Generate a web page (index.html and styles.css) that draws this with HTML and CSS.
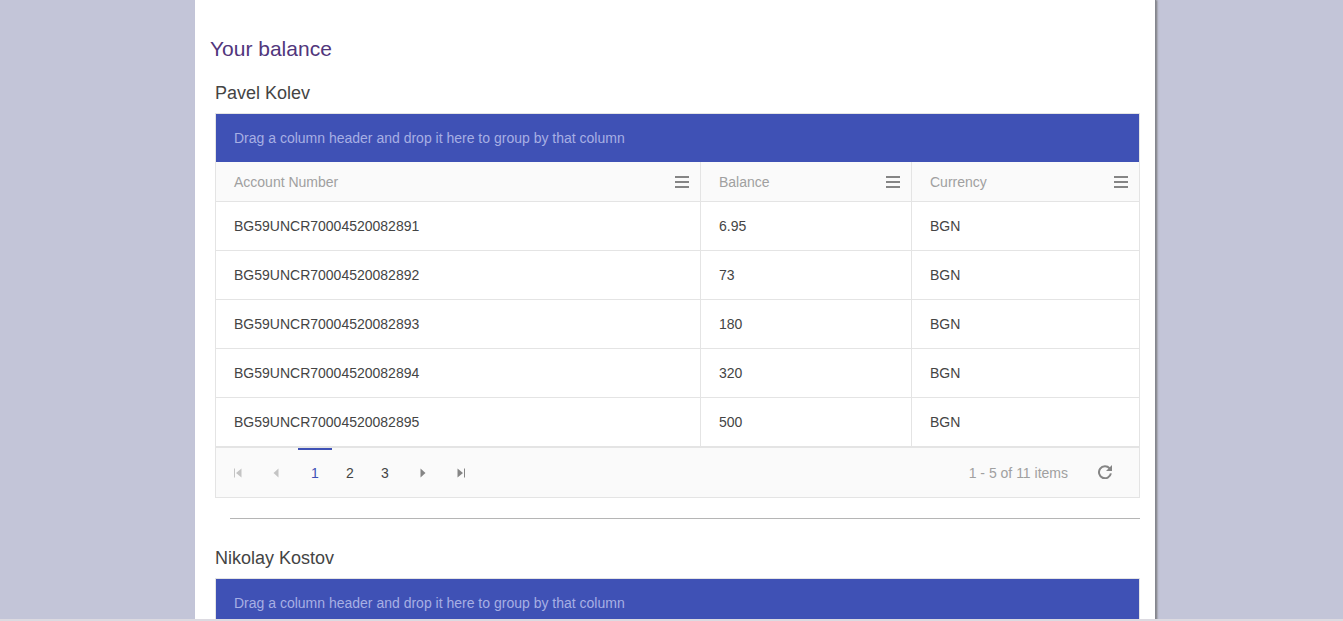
FILE: index.html
```html
<!DOCTYPE html>
<html lang="en">
<head>
<meta charset="utf-8">
<title>Your balance</title>
<link rel="stylesheet" href="styles.css">
</head>
<body>
<div class="viewport">
<main class="panel">
  <h2 class="title">Your balance</h2>

  <section class="account">
    <h3 class="owner">Pavel Kolev</h3>
    <div class="grid">
      <div class="group-bar">Drag a column header and drop it here to group by that column</div>
      <table class="table">
        <colgroup><col class="col-number"><col class="col-balance"><col class="col-currency"></colgroup>
        <thead>
          <tr>
            <th scope="col"><div class="head"><span>Account Number</span><button class="menu" type="button" aria-label="Account Number column menu"><svg width="14" height="12" viewBox="0 0 14 12"><path d="M0 0h14v2H0zM0 5h14v2H0zM0 10h14v2H0z"/></svg></button></div></th>
            <th scope="col"><div class="head"><span>Balance</span><button class="menu" type="button" aria-label="Balance column menu"><svg width="14" height="12" viewBox="0 0 14 12"><path d="M0 0h14v2H0zM0 5h14v2H0zM0 10h14v2H0z"/></svg></button></div></th>
            <th scope="col"><div class="head"><span>Currency</span><button class="menu" type="button" aria-label="Currency column menu"><svg width="14" height="12" viewBox="0 0 14 12"><path d="M0 0h14v2H0zM0 5h14v2H0zM0 10h14v2H0z"/></svg></button></div></th>
          </tr>
        </thead>
        <tbody>
          <tr><td>BG59UNCR70004520082891</td><td>6.95</td><td>BGN</td></tr>
          <tr><td>BG59UNCR70004520082892</td><td>73</td><td>BGN</td></tr>
          <tr><td>BG59UNCR70004520082893</td><td>180</td><td>BGN</td></tr>
          <tr><td>BG59UNCR70004520082894</td><td>320</td><td>BGN</td></tr>
          <tr><td>BG59UNCR70004520082895</td><td>500</td><td>BGN</td></tr>
        </tbody>
      </table>
      <nav class="pager" aria-label="Pages">
        <button class="arrow" type="button" disabled aria-label="First page"><svg width="8" height="10" viewBox="0 0 8 10"><path d="M0 0.500h1v9H0zM7.500 0.500v9L2 5z"/></svg></button>
        <button class="arrow" type="button" disabled aria-label="Previous page"><svg width="6" height="10" viewBox="0 0 6 10"><path d="M5.500 0.500v9L0.500 5z"/></svg></button>
        <div class="pages">
          <a class="page current" href="#1" aria-current="page">1</a>
          <a class="page" href="#2">2</a>
          <a class="page" href="#3">3</a>
        </div>
        <button class="arrow" type="button" aria-label="Next page"><svg width="6" height="10" viewBox="0 0 6 10"><path d="M0.500 0.500v9l5-4.500z"/></svg></button>
        <button class="arrow" type="button" aria-label="Last page"><svg width="8" height="10" viewBox="0 0 8 10"><path d="M7 0.500h1v9H7zM0.500 0.500v9L6 5z"/></svg></button>
        <span class="info">1 - 5 of 11 items</span>
        <button class="refresh" type="button" aria-label="Refresh"><svg width="14" height="14" viewBox="0 0 14 14"><path class="ring" d="M11.600 3.400A6 6 0 1 0 12.900 8.400"/><path d="M14 0v6H8z"/></svg></button>
      </nav>
    </div>
    <hr class="rule">
  </section>

  <section class="account">
    <h3 class="owner">Nikolay Kostov</h3>
    <div class="grid">
      <div class="group-bar">Drag a column header and drop it here to group by that column</div>
    </div>
  </section>
</main>
</div>
</body>
</html>
```
FILE: styles.css
```css
* { box-sizing: border-box; }

body {
  margin: 0;
  background: #c3c5d8;
  color: #444;
  font: 14px/20px "Liberation Sans", Arial, sans-serif;
}

.viewport {
  height: 100vh;
  overflow: hidden;
  padding-left: 7px;
  border-bottom: 2px solid #dcdae1;
}

.panel {
  max-width: 960px;
  min-height: 100%;
  margin: 0 auto;
  padding: 36px 15px 0;
  background: #fff;
  box-shadow: 1px 0 0 #85868f, 2px 0 2px #777;
}

.title {
  margin: 0;
  color: #51367c;
  font-size: 21px;
  font-weight: 400;
  line-height: 26px;
}

.account { padding-left: 5px; }

.owner {
  margin: 0;
  padding: 19px 0 7px;
  font-size: 18px;
  font-weight: 400;
  line-height: 25px;
}

.grid { border: 1px solid #e4e4e4; }

.group-bar {
  padding: 14px 18px;
  background: #3f51b5;
  color: #a7afe4;
}

.table {
  width: 100%;
  table-layout: fixed;
  border-spacing: 0;
}

.col-balance { width: 211px; }
.col-currency { width: 228px; }

.table th,
.table td {
  border-bottom: 1px solid #e4e4e4;
  text-align: left;
  font-weight: 400;
}

.table th {
  padding: 0 11px 0 18px;
  background: #fafafa;
  color: #a0a0a0;
}

.table td { padding: 14px 18px; }

.table th + th,
.table td + td { border-left: 1px solid #e4e4e4; }

.head {
  display: flex;
  align-items: center;
  justify-content: space-between;
  height: 39px;
}

button {
  display: flex;
  align-items: center;
  justify-content: center;
  padding: 0;
  border: 0;
  background: none;
}

svg { display: block; fill: #858585; }

.menu { height: 20px; }

.pager {
  display: flex;
  align-items: center;
  height: 50px;
  padding: 0 27px 0 3px;
  border-top: 1px solid #e4e4e4;
  background: #fafafa;
}

.arrow {
  width: 38px;
  height: 38px;
}

.arrow:disabled svg { fill: #c4c4c4; }

.pages {
  display: flex;
  gap: 1px;
  align-self: stretch;
  padding: 0 2px 0 3px;
}

.page {
  width: 34px;
  padding-top: 13px;
  border-top: 2px solid transparent;
  color: #444;
  text-align: center;
  text-decoration: none;
}

.current {
  border-top-color: #3f51b5;
  color: #3f51b5;
}

.info {
  margin-left: auto;
  color: #a0a0a0;
}

.refresh {
  margin-left: 30px;
  padding-bottom: 2px;
}

.ring {
  fill: none;
  stroke: #858585;
  stroke-width: 2;
}

.rule {
  height: 1px;
  margin: 20px 0 8px 15px;
  border: 0;
  background: #b5b5b5;
}
```
